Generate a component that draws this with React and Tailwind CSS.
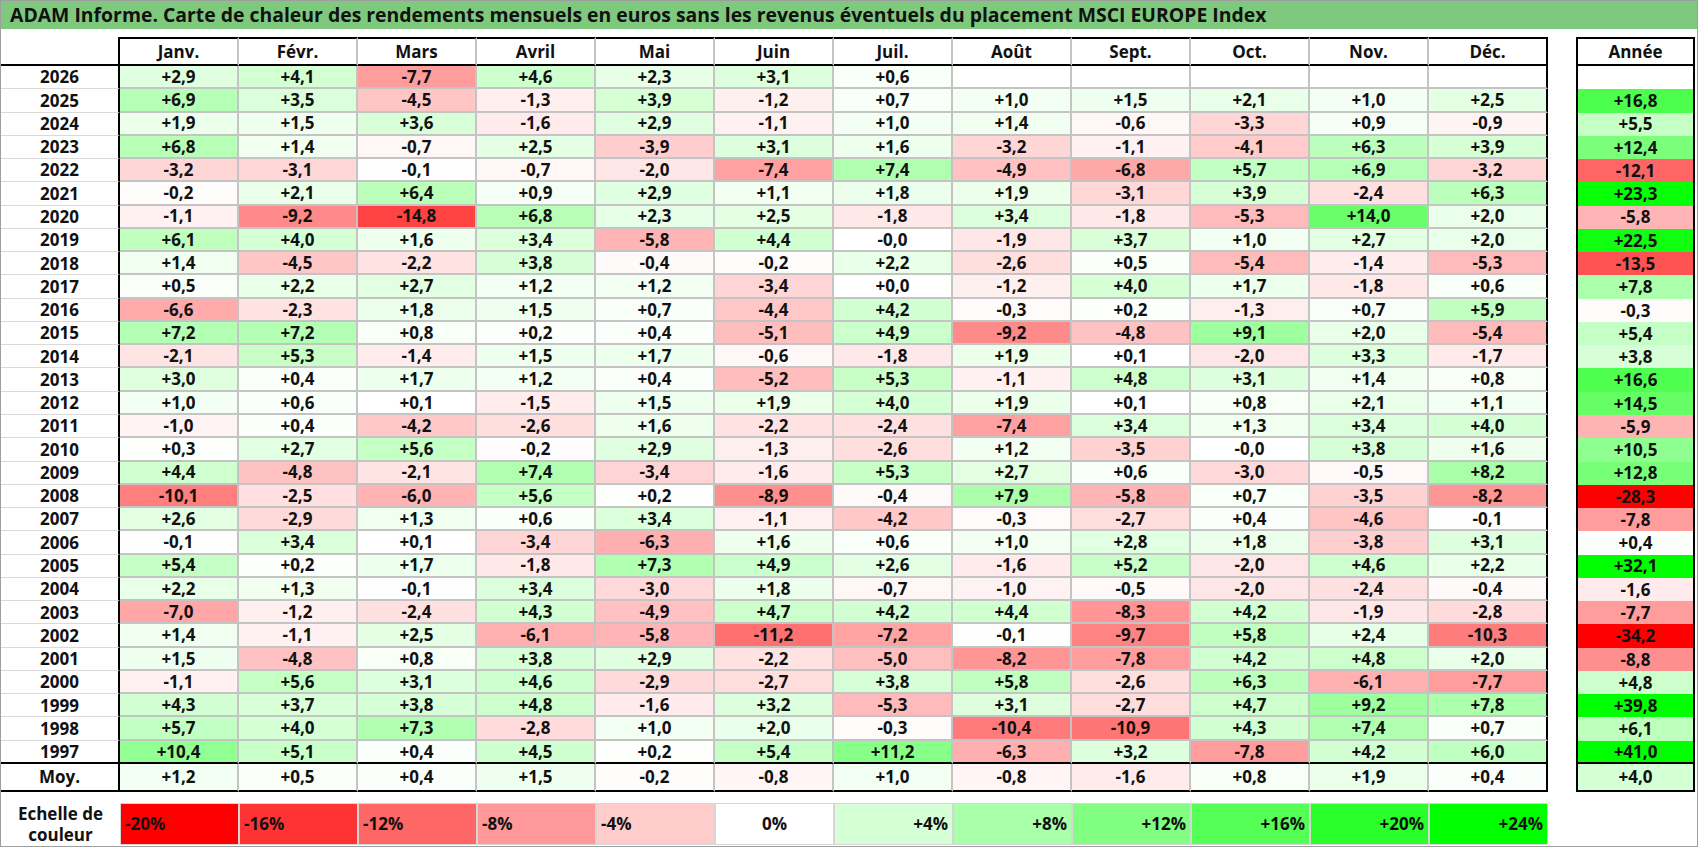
import React from 'react'

const months = ['Janv.', 'Févr.', 'Mars', 'Avril', 'Mai', 'Juin', 'Juil.', 'Août', 'Sept.', 'Oct.', 'Nov.', 'Déc.']

// year, 12 months, année ("_" = empty cell)
const raw = [
  '2026 +2,9 +4,1 -7,7 +4,6 +2,3 +3,1 +0,6 _ _ _ _ _ _',
  '2025 +6,9 +3,5 -4,5 -1,3 +3,9 -1,2 +0,7 +1,0 +1,5 +2,1 +1,0 +2,5 +16,8',
  '2024 +1,9 +1,5 +3,6 -1,6 +2,9 -1,1 +1,0 +1,4 -0,6 -3,3 +0,9 -0,9 +5,5',
  '2023 +6,8 +1,4 -0,7 +2,5 -3,9 +3,1 +1,6 -3,2 -1,1 -4,1 +6,3 +3,9 +12,4',
  '2022 -3,2 -3,1 -0,1 -0,7 -2,0 -7,4 +7,4 -4,9 -6,8 +5,7 +6,9 -3,2 -12,1',
  '2021 -0,2 +2,1 +6,4 +0,9 +2,9 +1,1 +1,8 +1,9 -3,1 +3,9 -2,4 +6,3 +23,3',
  '2020 -1,1 -9,2 -14,8 +6,8 +2,3 +2,5 -1,8 +3,4 -1,8 -5,3 +14,0 +2,0 -5,8',
  '2019 +6,1 +4,0 +1,6 +3,4 -5,8 +4,4 -0,0 -1,9 +3,7 +1,0 +2,7 +2,0 +22,5',
  '2018 +1,4 -4,5 -2,2 +3,8 -0,4 -0,2 +2,2 -2,6 +0,5 -5,4 -1,4 -5,3 -13,5',
  '2017 +0,5 +2,2 +2,7 +1,2 +1,2 -3,4 +0,0 -1,2 +4,0 +1,7 -1,8 +0,6 +7,8',
  '2016 -6,6 -2,3 +1,8 +1,5 +0,7 -4,4 +4,2 -0,3 +0,2 -1,3 +0,7 +5,9 -0,3',
  '2015 +7,2 +7,2 +0,8 +0,2 +0,4 -5,1 +4,9 -9,2 -4,8 +9,1 +2,0 -5,4 +5,4',
  '2014 -2,1 +5,3 -1,4 +1,5 +1,7 -0,6 -1,8 +1,9 +0,1 -2,0 +3,3 -1,7 +3,8',
  '2013 +3,0 +0,4 +1,7 +1,2 +0,4 -5,2 +5,3 -1,1 +4,8 +3,1 +1,4 +0,8 +16,6',
  '2012 +1,0 +0,6 +0,1 -1,5 +1,5 +1,9 +4,0 +1,9 +0,1 +0,8 +2,1 +1,1 +14,5',
  '2011 -1,0 +0,4 -4,2 -2,6 +1,6 -2,2 -2,4 -7,4 +3,4 +1,3 +3,4 +4,0 -5,9',
  '2010 +0,3 +2,7 +5,6 -0,2 +2,9 -1,3 -2,6 +1,2 -3,5 -0,0 +3,8 +1,6 +10,5',
  '2009 +4,4 -4,8 -2,1 +7,4 -3,4 -1,6 +5,3 +2,7 +0,6 -3,0 -0,5 +8,2 +12,8',
  '2008 -10,1 -2,5 -6,0 +5,6 +0,2 -8,9 -0,4 +7,9 -5,8 +0,7 -3,5 -8,2 -28,3',
  '2007 +2,6 -2,9 +1,3 +0,6 +3,4 -1,1 -4,2 -0,3 -2,7 +0,4 -4,6 -0,1 -7,8',
  '2006 -0,1 +3,4 +0,1 -3,4 -6,3 +1,6 +0,6 +1,0 +2,8 +1,8 -3,8 +3,1 +0,4',
  '2005 +5,4 +0,2 +1,7 -1,8 +7,3 +4,9 +2,6 -1,6 +5,2 -2,0 +4,6 +2,2 +32,1',
  '2004 +2,2 +1,3 -0,1 +3,4 -3,0 +1,8 -0,7 -1,0 -0,5 -2,0 -2,4 -0,4 -1,6',
  '2003 -7,0 -1,2 -2,4 +4,3 -4,9 +4,7 +4,2 +4,4 -8,3 +4,2 -1,9 -2,8 -7,7',
  '2002 +1,4 -1,1 +2,5 -6,1 -5,8 -11,2 -7,2 -0,1 -9,7 +5,8 +2,4 -10,3 -34,2',
  '2001 +1,5 -4,8 +0,8 +3,8 +2,9 -2,2 -5,0 -8,2 -7,8 +4,2 +4,8 +2,0 -8,8',
  '2000 -1,1 +5,6 +3,1 +4,6 -2,9 -2,7 +3,8 +5,8 -2,6 +6,3 -6,1 -7,7 +4,8',
  '1999 +4,3 +3,7 +3,8 +4,8 -1,6 +3,2 -5,3 +3,1 -2,7 +4,7 +9,2 +7,8 +39,8',
  '1998 +5,7 +4,0 +7,3 -2,8 +1,0 +2,0 -0,3 -10,4 -10,9 +4,3 +7,4 +0,7 +6,1',
  '1997 +10,4 +5,1 +0,4 +4,5 +0,2 +5,4 +11,2 -6,3 +3,2 -7,8 +4,2 +6,0 +41,0',
]

const rows = raw.map((line) => {
  const parts = line.split(' ').map((p) => (p === '_' ? '' : p))
  return { year: parts[0], values: parts.slice(1, 13), total: parts[13] }
})

const avg = {
  values: ['+1,2', '+0,5', '+0,4', '+1,5', '-0,2', '-0,8', '+1,0', '-0,8', '-1,6', '+0,8', '+1,9', '+0,4'],
  total: '+4,0',
}

// red at -20, white at 0, green at +24
const heat = (s) => {
  if (!s) return '#ffffff'
  const v = parseFloat(s.replace(',', '.'))
  if (v < 0) {
    const c = Math.round(255 * (1 - Math.min(1, -v / 20)))
    return `rgb(255,${c},${c})`
  }
  const c = Math.round(255 * (1 - Math.min(1, v / 24)))
  return `rgb(${c},255,${c})`
}

const scale = [
  { label: '-20%', cls: 'bg-[#ff0000] justify-start' },
  { label: '-16%', cls: 'bg-[#ff3333] justify-start' },
  { label: '-12%', cls: 'bg-[#ff6666] justify-start' },
  { label: '-8%', cls: 'bg-[#ff9999] justify-start' },
  { label: '-4%', cls: 'bg-[#ffcccc] justify-start' },
  { label: '0%', cls: 'bg-white justify-center' },
  { label: '+4%', cls: 'bg-[#d5ffd5] justify-end' },
  { label: '+8%', cls: 'bg-[#aaffaa] justify-end' },
  { label: '+12%', cls: 'bg-[#80ff80] justify-end' },
  { label: '+16%', cls: 'bg-[#55ff55] justify-end' },
  { label: '+20%', cls: 'bg-[#2bff2b] justify-end' },
  { label: '+24%', cls: 'bg-[#00ff00] justify-end' },
]

const HeaderRow = () => (
  <div className="flex h-[29px]">
    <div className="w-[119px] shrink-0 border-r-2 border-b-2 border-black" />
    {months.map((m, i) => (
      <div
        key={m}
        className={
          i === 11
            ? 'w-[119px] shrink-0 flex items-center justify-center border-t-2 border-b-2 border-r-2 border-black'
            : 'w-[119px] shrink-0 flex items-center justify-center border-t-2 border-b-2 border-t-black border-b-black border-r-2 border-r-[#c4c4c4]'
        }
      >
        {m}
      </div>
    ))}
    <div className="w-[28px] shrink-0" />
    <div className="w-[119px] shrink-0 flex items-center justify-center border-2 border-black">Année</div>
  </div>
)

const DataRow = ({ year, values, total, last }) => (
  <div className="flex h-[23.27px]">
    <div
      className={
        last
          ? 'w-[119px] shrink-0 flex items-center justify-center border-r-2 border-b-2 border-black'
          : 'w-[119px] shrink-0 flex items-center justify-center border-r-2 border-r-black border-b border-b-[#d9d9d9]'
      }
    >
      {year}
    </div>
    {values.map((v, i) => (
      <div
        key={i}
        style={{ backgroundColor: heat(v) }}
        className={
          (i === 11 ? 'border-r-black ' : 'border-r-[#c4c4c4] ') +
          (last ? 'border-b-black ' : 'border-b-[#c4c4c4] ') +
          'w-[119px] shrink-0 flex items-center justify-center border-r-2 border-b-2'
        }
      >
        {v}
      </div>
    ))}
    <div className="w-[28px] shrink-0" />
    <div
      style={{ backgroundColor: heat(total) }}
      className={
        last
          ? 'w-[119px] shrink-0 flex items-center justify-center border-x-2 border-b-2 border-black'
          : 'w-[119px] shrink-0 flex items-center justify-center border-x-2 border-black'
      }
    >
      {total}
    </div>
  </div>
)

const AverageRow = () => (
  <div className="flex h-[28px]">
    <div className="w-[119px] shrink-0 flex items-center justify-center border-r-2 border-b-2 border-black">Moy.</div>
    {avg.values.map((v, i) => (
      <div
        key={i}
        style={{ backgroundColor: heat(v) }}
        className={
          i === 11
            ? 'w-[119px] shrink-0 flex items-center justify-center border-r-2 border-b-2 border-black'
            : 'w-[119px] shrink-0 flex items-center justify-center border-r-2 border-r-[#c4c4c4] border-b-2 border-b-black'
        }
      >
        {v}
      </div>
    ))}
    <div className="w-[28px] shrink-0" />
    <div
      style={{ backgroundColor: heat(avg.total) }}
      className="w-[119px] shrink-0 flex items-center justify-center border-x-2 border-b-2 border-black"
    >
      {avg.total}
    </div>
  </div>
)

const ScaleRow = () => (
  <div className="flex h-[42px] mt-[11px]">
    <div className="w-[119px] shrink-0 flex flex-col items-center justify-center leading-[21px] text-[17px]">
      <span>Echelle de</span>
      <span>couleur</span>
    </div>
    {scale.map((s) => (
      <div
        key={s.label}
        className={'w-[119px] shrink-0 flex items-center px-[4px] border border-[#d6d6d6] text-[17px] ' + s.cls}
      >
        {s.label}
      </div>
    ))}
  </div>
)

export default function App() {
  return (
    <div className="w-[1698px] h-[847px] bg-white border border-[#9e9e9e] font-['Open_Sans',sans-serif] font-bold text-[17px] text-[#111]">
      <div className="h-[28px] bg-[#7fc97f] flex items-center pl-[9px] text-[19.4px] text-[#111]">
        ADAM Informe. Carte de chaleur des rendements mensuels en euros sans les revenus éventuels du placement MSCI EUROPE Index
      </div>
      <div className="mt-[8px]">
        <HeaderRow />
        {rows.map((r, i) => (
          <DataRow key={r.year} {...r} last={i === rows.length - 1} />
        ))}
        <AverageRow />
        <ScaleRow />
      </div>
    </div>
  )
}
